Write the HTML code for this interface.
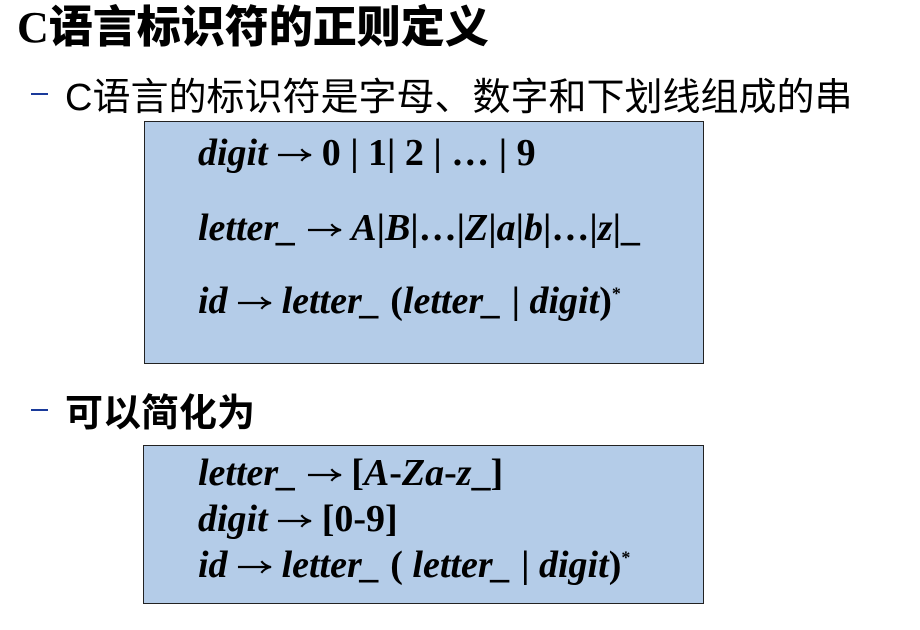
<!DOCTYPE html>
<html><head><meta charset="utf-8"><style>
body{margin:0;width:920px;height:630px;background:#fff;position:relative;overflow:hidden}
.a{position:absolute;white-space:nowrap}
.cj{font-family:"Liberation Sans","Noto Sans CJK SC",sans-serif}
.t{font-family:"Liberation Serif","Noto Sans CJK SC",serif;font-weight:bold;font-size:44px;left:17px;top:-9px}
.box{position:absolute;background:#b4cce8;border:1.5px solid #222;box-sizing:border-box}
.m{font-family:"Liberation Serif",serif;font-weight:bold;font-size:38px;color:#000}
.m i{font-style:italic}
.ar{display:inline-block;width:35px;height:16px;vertical-align:2px}
.dash{position:absolute;background:#1a3a9a;height:2px;width:17px;left:31px}
</style></head><body>
<svg width="0" height="0" style="position:absolute"><symbol id="r" viewBox="0 0 36 16"><path d="M1 8H33M25 2Q29 7 35 8Q29 9 25 14" stroke="#000" stroke-width="2.2" fill="none"/></symbol></svg>
<div class="a t">C<span style="font-family:'Noto Sans CJK SC',sans-serif;font-weight:900">语言标识符的正则定义</span></div>
<div class="dash" style="top:93px"></div>
<div class="a cj" style="left:65px;top:66px;font-size:38px">C语言的标识符是字母、数字和下划线组成的串</div>
<div class="box" style="left:144px;top:121px;width:560px;height:243px"></div>
<div class="a m" style="left:198px;top:131px"><i>digit</i> <svg class="ar"><use href="#r"/></svg> 0 | 1| 2 | … | 9</div>
<div class="a m" style="left:198px;top:206px"><i>letter_</i> <svg class="ar"><use href="#r"/></svg> <i>A</i>|<i>B</i>|…|<i>Z</i>|<i>a</i>|<i>b</i>|…|<i>z</i>|_</div>
<div class="a m" style="left:198px;top:279px"><i>id</i> <svg class="ar"><use href="#r"/></svg> <i>letter_</i> (<i>letter_</i> | <i>digit</i>)<sup style="font-size:18px">*</sup></div>
<div class="dash" style="top:409px"></div>
<div class="a" style="left:65px;top:382px;font-size:38px;font-weight:bold;font-family:'Noto Sans CJK SC',sans-serif">可以简化为</div>
<div class="box" style="left:143px;top:445px;width:561px;height:159px"></div>
<div class="a m" style="left:198px;top:451px"><i>letter_</i> <svg class="ar"><use href="#r"/></svg> [<i>A</i>-<i>Za</i>-<i>z</i>_]</div>
<div class="a m" style="left:198px;top:497px"><i>digit</i> <svg class="ar"><use href="#r"/></svg> [0-9]</div>
<div class="a m" style="left:198px;top:543px"><i>id</i> <svg class="ar"><use href="#r"/></svg> <i>letter_</i> ( <i>letter_</i> | <i>digit</i>)<sup style="font-size:18px">*</sup></div>
</body></html>
